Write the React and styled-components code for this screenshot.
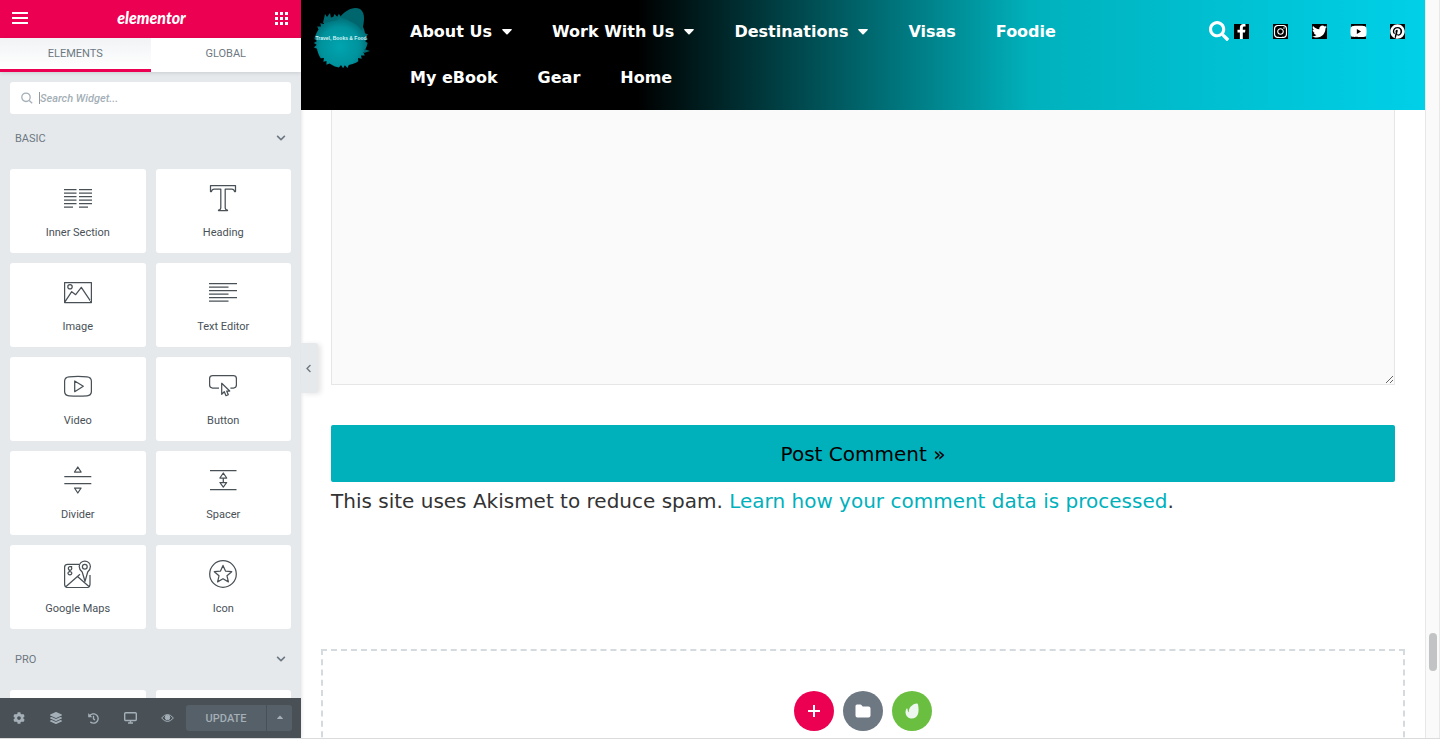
import React from 'react';
import styled, { createGlobalStyle } from 'styled-components';
import {
    FaChevronDown, FaChevronLeft, FaCog, FaLayerGroup, FaHistory, FaCaretUp,
    FaSearch, FaFacebookF, FaInstagram, FaTwitter, FaYoutube, FaPinterest,
} from 'react-icons/fa';

const GlobalStyle = createGlobalStyle`
    * {
        box-sizing: border-box;
    }

    body {
        margin: 0;
        background: #fff;
        font-family: Roboto, 'Liberation Sans', sans-serif;
    }

    button {
        font: inherit;
        border: none;
        padding: 0;
        cursor: pointer;
    }

    a {
        text-decoration: none;
    }
`;

// ---------- frame ----------

const Editor = styled.div`
    display: flex;
    height: calc(100vh - 2px);
    overflow: hidden;
    border-bottom: 1px solid #d9dbdd;
`;

const Sidebar = styled.aside`
    position: relative;
    z-index: 1;
    flex: 0 0 301px;
    display: flex;
    flex-direction: column;
    background: #e6e9ec;
    box-shadow: 0 0 4px rgba(0, 0, 0, 0.15);
`;

const Preview = styled.main`
    flex: 1;
    min-width: 0;
    overflow: hidden;
    font-family: 'DejaVu Sans', Verdana, sans-serif;
`;

const ScrollTrack = styled.div`
    flex: 0 0 15px;
    display: flex;
    flex-direction: column;
    align-items: center;
    background: #fafafa;
    border: solid #e8e8e8;
    border-width: 0 1px;

    &::before {
        content: '';
        flex: 633 0 0;
    }

    &::after {
        content: '';
        flex: 67 0 0;
    }
`;

const ScrollThumb = styled.div`
    width: 8px;
    flex: 38 0 0;
    border-radius: 4px;
    background: #c1c3c4;
`;

// ---------- sidebar ----------

const PanelHeader = styled.header`
    flex: 0 0 38px;
    display: flex;
    align-items: center;
    justify-content: space-between;
    padding: 0 13px 2px 12px;
    background: #eb0052;
    color: #fff;
`;

const PanelLogo = styled.span`
    font-family: Lato, sans-serif;
    font-size: 16px;
    font-style: italic;
    font-weight: 900;
    line-height: 20px;
`;

const HeaderButton = styled.button`
    display: flex;
    background: none;
    color: inherit;
    font-size: 16px;
`;

const Tabs = styled.div`
    flex: 0 0 34px;
    display: flex;
    box-shadow: 0 1px 4px rgba(0, 0, 0, 0.12);
`;

const Tab = styled.button`
    flex: 1;
    background: ${({ $active }) => ($active ? 'linear-gradient(#f1f3f5, #fff)' : '#fff')};
    border-bottom: 3px solid ${({ $active }) => ($active ? '#eb0052' : '#fff')};
    color: #6d7882;
    font-size: 11px;
    text-transform: uppercase;
`;

const Widgets = styled.div`
    flex: 1;
    min-height: 0;
    overflow: hidden;
    padding: 10px 10px 0;
`;

const SearchBox = styled.label`
    display: flex;
    align-items: center;
    gap: 6px;
    height: 32px;
    padding: 0 11px;
    border-radius: 3px;
    background: #fff;
    color: #a4afb7;
`;

const SearchInput = styled.input`
    flex: 1;
    min-width: 0;
    height: 12px;
    padding: 0;
    border: none;
    border-left: 1px solid #8f9aa3;
    outline: none;
    background: none;
    color: #6d7882;
    font: italic 500 11px Roboto, sans-serif;

    &::placeholder {
        color: #a4afb7;
        opacity: 1;
    }
`;

const Category = styled.section`
    margin-bottom: 6px;
`;

const CategoryTitle = styled.button`
    display: flex;
    align-items: center;
    justify-content: space-between;
    width: 100%;
    height: 55px;
    padding: 0 5px 7px;
    background: none;
    color: #6d7882;
    font-size: 11px;
    text-transform: uppercase;

    svg {
        font-size: 10px;
    }
`;

const WidgetGrid = styled.div`
    display: grid;
    grid-template-columns: 1fr 1fr;
    gap: 10px;
`;

const WidgetCard = styled.button`
    display: flex;
    flex-direction: column;
    align-items: center;
    gap: 13px;
    height: 84px;
    padding-top: 15px;
    border-radius: 3px;
    background: #fff;
    color: #495157;
    font-size: 11px;
    line-height: 16px;
    cursor: move;
`;

const PanelFooter = styled.footer`
    flex: 0 0 40px;
    display: flex;
    align-items: center;
    padding-right: 9px;
    background: #495157;
`;

const FooterTool = styled.button`
    flex: 1;
    display: flex;
    justify-content: center;
    background: none;
    color: #a4afb7;
    font-size: 12px;
`;

const UpdateButton = styled.button`
    width: ${({ $small }) => ($small ? '25px' : '80px')};
    height: 26px;
    margin-left: ${({ $small }) => ($small ? '1px' : '0')};
    border-radius: ${({ $small }) => ($small ? '0 3px 3px 0' : '3px 0 0 3px')};
    background: #556068;
    color: #a4afb7;
    font-size: ${({ $small }) => ($small ? '10px' : '11px')};
    font-weight: 500;
    text-transform: uppercase;
`;

const PanelToggle = styled.button`
    position: absolute;
    top: calc(50% - 26px);
    left: 100%;
    display: flex;
    align-items: center;
    width: 17px;
    height: 50px;
    padding-left: 3px;
    border-radius: 0 3px 3px 0;
    background: #e6e9ec;
    box-shadow: 3px 1px 5px rgba(0, 0, 0, 0.1);
    color: #6d7882;
    font-size: 9px;
`;

// ---------- previewed site ----------

const SiteHeader = styled.header`
    display: flex;
    align-items: flex-start;
    padding: 8px 20px 10px 10px;
    background: linear-gradient(90deg, #000 30%, #00b1bc 65%, #00d0e8);
`;

const SiteNav = styled.nav`
    flex: 1;
    display: flex;
    flex-wrap: wrap;
    margin-left: 19px;
`;

const NavLink = styled.a`
    display: flex;
    align-items: center;
    gap: 10px;
    padding: 14px 20px 12px;
    color: #fff;
    font-size: 16px;
    font-weight: 700;
    line-height: 20px;
`;

const HeaderTools = styled.div`
    display: flex;
    align-items: center;
    height: 46px;
    margin-left: 40px;
    gap: 5px;
    color: #fff;
`;

const SearchToggle = styled(HeaderButton)`
    font-size: 20px;
`;

const Socials = styled.div`
    display: flex;
    gap: 24px;
`;

const SocialLink = styled.a`
    display: flex;
    align-items: center;
    justify-content: center;
    width: 15px;
    height: 15px;
    background: #000;
    color: #fff;
    font-size: 15px;

    svg {
        flex: none;
    }
`;

const CommentForm = styled.form`
    display: flex;
    flex-direction: column;
    padding: 0 30px;
`;

const CommentField = styled.textarea`
    display: block;
    width: 100%;
    height: 275px;
    border: 1px solid #e6e6e6;
    border-top: none;
    outline: none;
    background: #fafafa;
`;

const SubmitButton = styled.button`
    height: 57px;
    margin-top: 40px;
    border-radius: 2px;
    background: #00b1bc;
    color: #000;
    font-size: 20px;
`;

const SpamNote = styled.p`
    margin: 4px 0 0;
    color: #333;
    font-size: 20px;
    line-height: 30px;
`;

const NoteLink = styled.a`
    color: #00b1bc;
`;

const AddSection = styled.div`
    display: flex;
    justify-content: center;
    gap: 9px;
    height: 160px;
    margin: 133px 20px 0;
    padding-top: 40px;
    border: 2px dashed #d5dadf;
`;

const RoundButton = styled.button`
    display: flex;
    align-items: center;
    justify-content: center;
    width: 40px;
    height: 40px;
    border-radius: 50%;
    background: ${({ $color }) => $color};
    color: #fff;
`;

// ---------- drawings ----------

const LineIcon = ({ children }) => (
    <svg width="28" height="28" viewBox="0 0 28 28" fill="none" stroke="#495157" strokeWidth="1.25" strokeLinejoin="round">
        {children}
    </svg>
);

const widgets = [
    { name: 'Inner Section', icon: <path d="M0 5.500h12.500M15 5.500h13M0 9h12.500M15 9h13M0 12.500h12.500M15 12.500h13M0 16h12.500M15 16h13M0 19.500h12.500M15 19.500h13M0 23h9M15 23h9" /> },
    { name: 'Heading', icon: <path d="M1.500 1.500h25v6h-1c-.3-1.600-1-2.500-2.600-2.500H16.200V23.500c0 1.800.4 2.500 2.300 2.500v.5h-9V26c1.900 0 2.300-.7 2.300-2.500V5H5.100C3.500 5 2.800 5.900 2.500 7.500h-1z" /> },
    { name: 'Image', icon: <><path d="M.6 4.500h26.800v20H.6zM.6 24.300l7.100-10.600 4 3 5.600-7.400 10.100 15" /><circle cx="6" cy="8.700" r="2.200" /></> },
    { name: 'Text Editor', icon: <path d="M0 5.500h28M0 9h19.500M0 12.500h28M0 16h19.500M0 19.500h28M0 23h19.500" /> },
    { name: 'Video', icon: <path d="M5 4.800q9-.8 18 0 4.400.4 4.400 4.500v10q0 4.100-4.400 4.500-9 .8-18 0Q.6 23.400.6 19.300v-10Q.6 5.200 5 4.800zM10.700 9v10.700l8.600-5.400z" /> },
    { name: 'Button', icon: <path d="M10 16H3.600q-3 0-3-3V6.500q0-3 3-3h20.800q3 0 3 3V13q0 3-3 3h-3M12.700 11.300v11l2.600-2.600 1.700 4 2.300-1-1.600-3.700h3z" /> },
    { name: 'Divider', icon: <path d="M.3 10.500h27M.3 17.500h27M13.800 1l3.300 5h-6.600zM10.500 22h6.600l-3.300 5z" /> },
    { name: 'Spacer', icon: <path d="M1 4.500h26.500M1 23.500h26.500M14.300 7l3.400 5h-6.800zM10.900 16.500h6.800l-3.400 4.700zM14.300 12v4.500" /> },
    {
        name: 'Google Maps',
        icon: (
            <>
                <path d="M15 4.300H3.600q-3 0-3 3v17.200q0 3 3 3h19.400q3 0 3-3V15M1.500 27l14.500-12.800M13.500 16.500L25.500 27M21 21.300l-2.800-9.300q-3-2.400-3-5.400a5.600 5.600 0 0 1 11.200 0q0 3-2.700 5.400z" />
                <circle cx="20.800" cy="6.700" r="2.400" />
                <path d="M8.200 6.500H5.800a1.700 1.900 0 1 0 1.500.6M5.800 10.200c-1 1 0 1.300.4 1.400a1.900 1.600 0 1 1-.6 0" />
            </>
        ),
    },
    {
        name: 'Icon',
        icon: (
            <>
                <circle cx="14" cy="14" r="13.300" />
                <path d="M14 5.400l2.500 5.700 6.200.6-4.700 4.100 1.400 6.100-5.400-3.200-5.400 3.200 1.400-6.100-4.700-4.100 6.200-.6z" />
            </>
        ),
    },
];

const MenuIcon = () => (
    <svg width="16" height="12" viewBox="0 0 16 12" stroke="currentColor" strokeWidth="2">
        <path d="M0 1h16M0 6h16M0 11h16" />
    </svg>
);

const GridIcon = () => (
    <svg width="13" height="13" viewBox="0 0 13 13" fill="currentColor">
        {[0, 5, 10].map((y) => [0, 5, 10].map((x) => <rect key={`${x}-${y}`} x={x} y={y} width="3" height="3" />))}
    </svg>
);

const MagnifierIcon = () => (
    <svg width="12" height="12" viewBox="0 0 12 12" fill="none" stroke="currentColor" strokeWidth="1.300">
        <circle cx="5" cy="5.300" r="4.200" />
        <path d="M8.200 8.400l3 2.800" />
    </svg>
);

const DesktopIcon = () => (
    <svg width="13" height="12" viewBox="0 0 13 12" fill="none" stroke="currentColor" strokeWidth="1.400">
        <rect x=".7" y=".7" width="11.600" height="7.800" rx="1" />
        <path d="M6.500 8.500v2.500M4 11h5" />
    </svg>
);

const EyeIcon = () => (
    <svg width="13" height="12" viewBox="0 0 13 12" fill="none" stroke="currentColor">
        <path d="M.6 6Q6.500-1 12.400 6 6.500 13 .6 6z" />
        <circle cx="6.500" cy="5.500" r="2.300" fill="currentColor" />
    </svg>
);

const MenuCaret = () => (
    <svg width="10" height="6" viewBox="0 0 10 6" fill="currentColor">
        <path d="M.8 0h8.400q1 .1.500.9L5.600 5.200q-.6.500-1.200 0L.3.900Q-.2.100.8 0z" />
    </svg>
);

const PlusIcon = () => (
    <svg width="12" height="12" viewBox="0 0 12 12" stroke="currentColor" strokeWidth="2">
        <path d="M0 6h12M6 0v12" />
    </svg>
);

const FolderIcon = () => (
    <svg width="16" height="14" viewBox="0 0 16 14" fill="currentColor">
        <path d="M2 .5h3.500q.5 0 .9.500l1.300 1.600H13.500q2 0 2 1.900v7q0 2-2 2H2.400q-1.900 0-1.900-2V2Q.5.500 2 .5z" />
    </svg>
);

const LeafIcon = () => (
    <svg width="14" height="16" viewBox="0 0 14 16" fill="#edf6ef">
        <path d="M11.800.4c.7 0 1 .4 1.200 1.200.7 3 .9 7.200-.2 9.900-1.200 3-4.200 4.600-7.200 4C2.500 14.900.5 12.500.5 9.600c0-1.700.4-3.600 1.200-4.200.8-.5.8 1.400 1.500 3.400.2.600.7.600.6-.1C3.600 4.700 7.300.8 11.800.4z" />
    </svg>
);

// jagged edge of the paint splat behind the site name
const splatPoints = Array.from({ length: 80 }, (_, i) => {
    const angle = (i * Math.PI) / 40;
    const radius = 24 + ((i * 7) % 5) * 0.6 + (i % 2) * 1.5;
    return `${(30 + radius * Math.cos(angle)).toFixed(1)},${(33 + radius * Math.sin(angle)).toFixed(1)}`;
}).join(' ');

const SiteLogo = () => (
    <svg width="60" height="62" viewBox="0 0 60 62" role="img" aria-label="Travel, Books & Food">
        <defs>
            <radialGradient id="splat" cx="48%" cy="60%" r="55%">
                <stop offset="0" stopColor="#00a5b0" />
                <stop offset="0.650" stopColor="#00929c" />
                <stop offset="1" stopColor="#006a72" />
            </radialGradient>
        </defs>
        <polygon points={splatPoints} fill="url(#splat)" />
        <path d="M29 9C34 3 42-2 49 1c6 4 4 14 2 22q-4-8-22-14z" fill="#00666d" />
        <path d="M12 15l2-9 2 3 3-4 1 5 5-2 2 4zM53 41l6 2-6 2z" fill="#006a72" />
        <text x="30" y="32" textAnchor="middle" fill="#d8f3f4" fontFamily="Liberation Sans Narrow, Liberation Sans, sans-serif" fontSize="5" fontWeight="700">
            Travel, Books &amp; Food
        </text>
    </svg>
);

const navItems = [
    { label: 'About Us', menu: true },
    { label: 'Work With Us', menu: true },
    { label: 'Destinations', menu: true },
    { label: 'Visas' },
    { label: 'Foodie' },
    { label: 'My eBook' },
    { label: 'Gear' },
    { label: 'Home' },
];

const socials = [
    { label: 'Facebook', icon: <FaFacebookF /> },
    { label: 'Instagram', icon: <FaInstagram /> },
    { label: 'Twitter', icon: <FaTwitter /> },
    { label: 'YouTube', icon: <FaYoutube size={17} /> },
    { label: 'Pinterest', icon: <FaPinterest /> },
];

const tools = [
    { label: 'Settings', icon: <FaCog /> },
    { label: 'Navigator', icon: <FaLayerGroup /> },
    { label: 'History', icon: <FaHistory size={11} /> },
    { label: 'Responsive Mode', icon: <DesktopIcon /> },
    { label: 'Preview Changes', icon: <EyeIcon /> },
];

const Panel = () => (
    <Sidebar>
        <PanelHeader>
            <HeaderButton aria-label="Menu"><MenuIcon /></HeaderButton>
            <PanelLogo>elementor</PanelLogo>
            <HeaderButton aria-label="Widgets"><GridIcon /></HeaderButton>
        </PanelHeader>
        <Tabs>
            <Tab $active>Elements</Tab>
            <Tab>Global</Tab>
        </Tabs>
        <Widgets>
            <SearchBox>
                <MagnifierIcon />
                <SearchInput type="text" placeholder="Search Widget..." aria-label="Search Widget" />
            </SearchBox>
            <Category>
                <CategoryTitle>Basic <FaChevronDown /></CategoryTitle>
                <WidgetGrid>
                    {widgets.map(({ name, icon }) => (
                        <WidgetCard key={name}>
                            <LineIcon>{icon}</LineIcon>
                            {name}
                        </WidgetCard>
                    ))}
                </WidgetGrid>
            </Category>
            <Category>
                <CategoryTitle>Pro <FaChevronDown /></CategoryTitle>
                <WidgetGrid>
                    <WidgetCard aria-label="Posts" />
                    <WidgetCard aria-label="Portfolio" />
                </WidgetGrid>
            </Category>
        </Widgets>
        <PanelFooter>
            {tools.map(({ label, icon }) => (
                <FooterTool key={label} aria-label={label}>{icon}</FooterTool>
            ))}
            <UpdateButton>Update</UpdateButton>
            <UpdateButton $small aria-label="Save Options"><FaCaretUp /></UpdateButton>
        </PanelFooter>
        <PanelToggle aria-label="Hide Panel"><FaChevronLeft /></PanelToggle>
    </Sidebar>
);

const App = () => {

    return (
        <>
            <GlobalStyle />
            <Editor>
                <Panel />
                <Preview>
                    <SiteHeader>
                        <SiteLogo />
                        <SiteNav>
                            {navItems.map(({ label, menu }) => (
                                <NavLink key={label} href="#">
                                    {label}
                                    {menu && <MenuCaret />}
                                </NavLink>
                            ))}
                        </SiteNav>
                        <HeaderTools>
                            <SearchToggle aria-label="Search"><FaSearch /></SearchToggle>
                            <Socials>
                                {socials.map(({ label, icon }) => (
                                    <SocialLink key={label} href="#" aria-label={label}>{icon}</SocialLink>
                                ))}
                            </Socials>
                        </HeaderTools>
                    </SiteHeader>
                    <CommentForm>
                        <CommentField aria-label="Comment" />
                        <SubmitButton type="button">Post Comment »</SubmitButton>
                        <SpamNote>
                            This site uses Akismet to reduce spam. <NoteLink href="#">Learn how your comment data is processed</NoteLink>.
                        </SpamNote>
                    </CommentForm>
                    <AddSection>
                        <RoundButton $color="#eb0052" aria-label="Add New Section"><PlusIcon /></RoundButton>
                        <RoundButton $color="#6d7882" aria-label="Add Template"><FolderIcon /></RoundButton>
                        <RoundButton $color="#6abf40" aria-label="Envato Elements"><LeafIcon /></RoundButton>
                    </AddSection>
                </Preview>
                <ScrollTrack><ScrollThumb /></ScrollTrack>
            </Editor>
        </>
    )
}

export default App;
